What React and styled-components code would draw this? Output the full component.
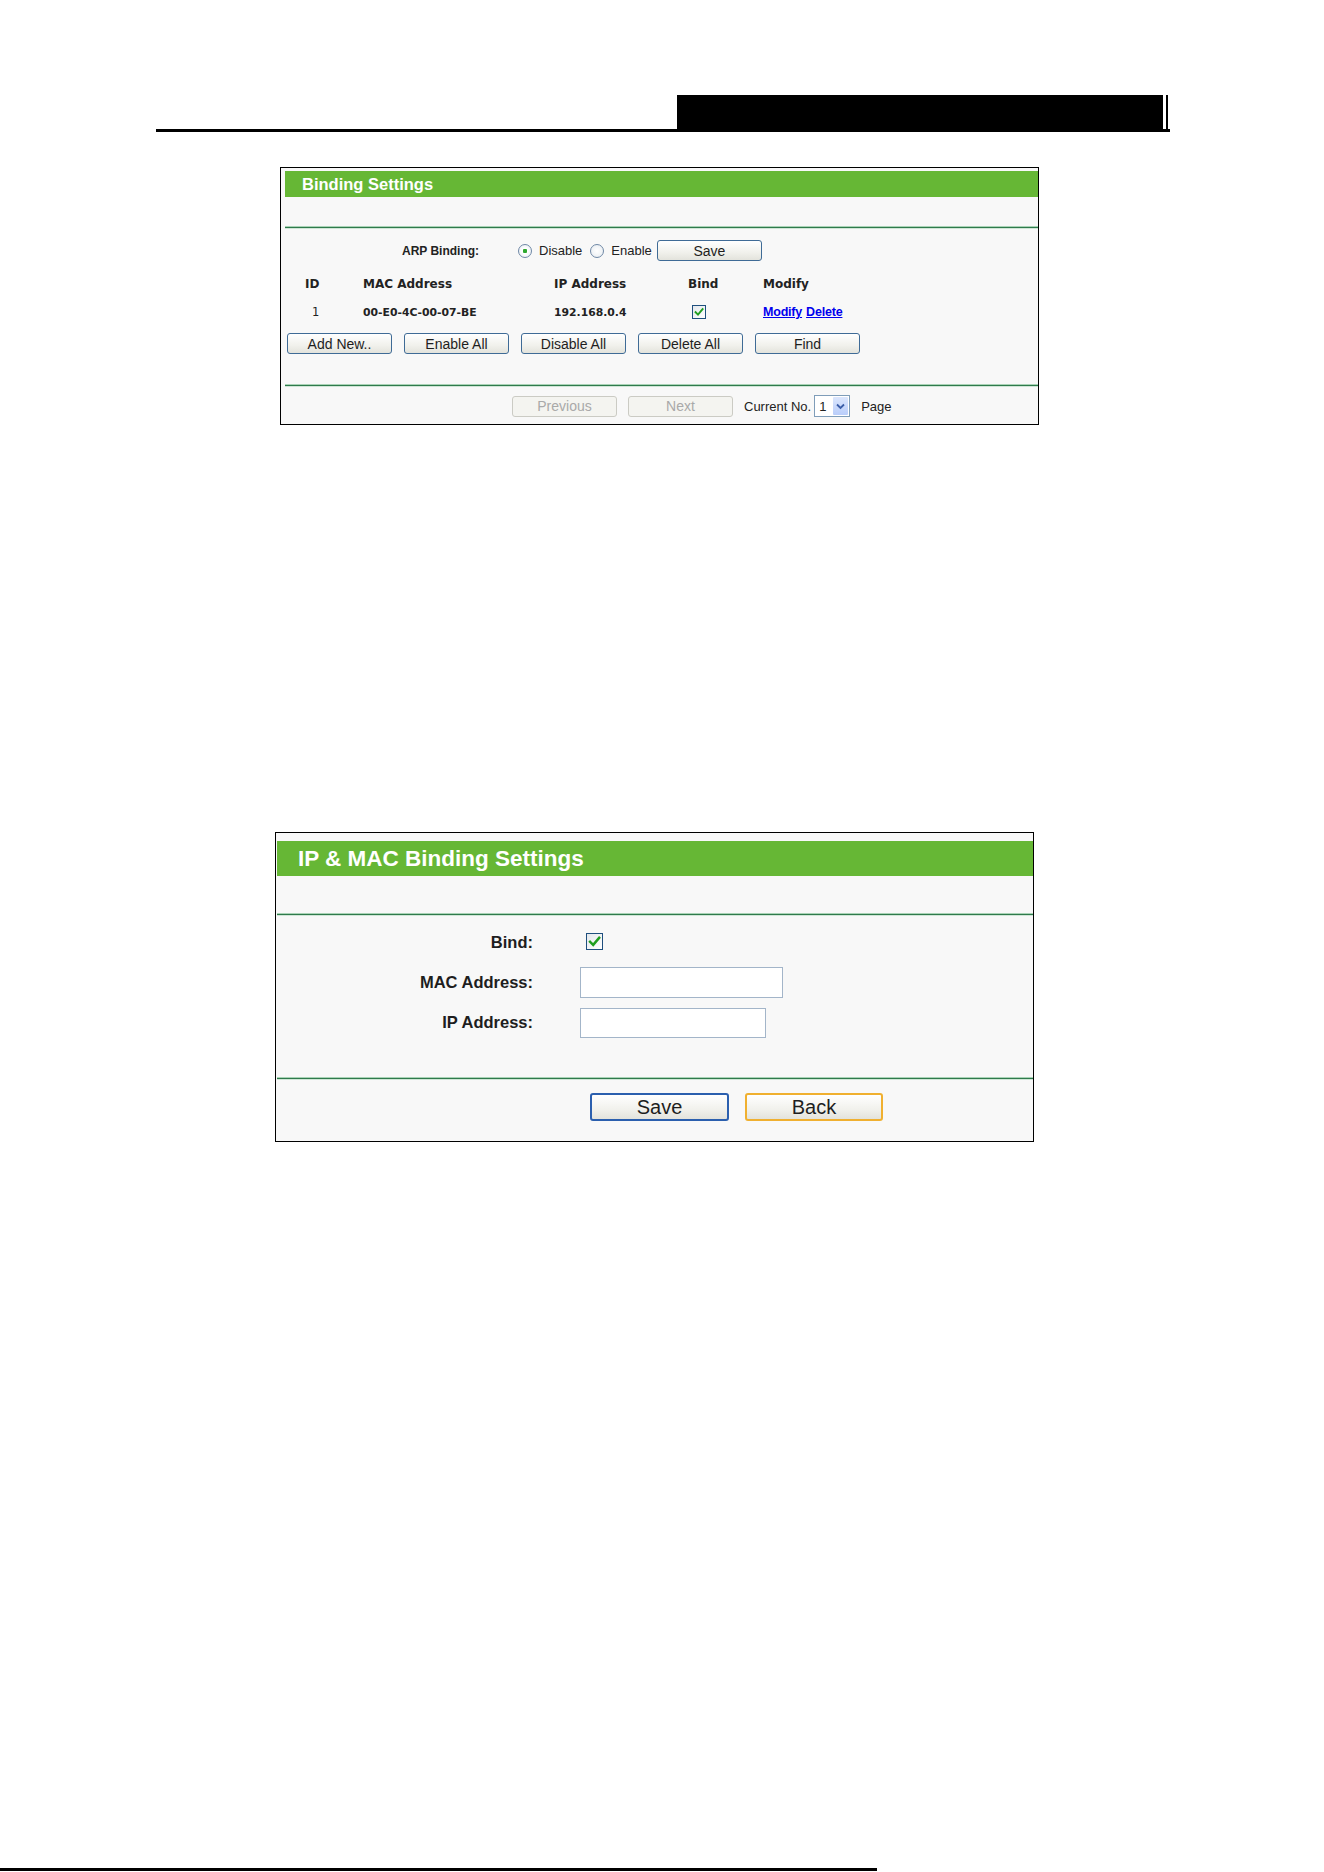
import React from 'react'
import styled, { createGlobalStyle } from 'styled-components'

const Global = createGlobalStyle`
body {
  margin: 0;
  background: #fff;
  font-family: "Liberation Sans", Arial, sans-serif;
  color: #222;
}
`

const Page = styled.div`
width: 1324px;
min-height: 1872px;
padding-top: 95px;
box-sizing: border-box;
display: flex;
flex-direction: column;
`

const Header = styled.div`
margin-left: 156px;
width: 1014px;
display: flex;
justify-content: flex-end;
border-bottom: 3px solid #000;
`

const HeaderBlock = styled.div`
width: 486px;
height: 34px;
margin-right: 7px;
background: #000;
box-shadow: 3px 0 0 0 #fff, 5px 0 0 0 #000;
`

const Panel = styled.div`
margin-left: ${({left}) => left}px;
margin-top: ${({top}) => top}px;
width: 759px;
box-sizing: border-box;
border: 1px solid #000;
background: #f8f8f8;
padding: ${({pad}) => pad};
`

const TitleBar = styled.div`
height: ${({h}) => h}px;
background: #66b735;
color: #fff;
font-weight: bold;
font-size: ${({size}) => size}px;
padding-left: ${({indent}) => indent}px;
display: flex;
align-items: center;
`

const Spacer = styled.div`
height: ${({h}) => h}px;
`

const Divider = styled.div`
height: 3px;
background: linear-gradient(#a9d3b6 0 1px, #2f7a4c 1px 2px, #cfe5d6 2px 3px);
`

const ArpRow = styled.div`
display: flex;
align-items: center;
height: 21px;
margin-top: 11px;
padding-left: 117px;
font-size: 13px;
`

const ArpLabel = styled.span`
font-weight: bold;
font-size: 12px;
width: 116px;
`

const Radio = styled.span`
width: 12px;
height: 12px;
border-radius: 50%;
border: 1px solid #6f88a6;
background: radial-gradient(circle, ${({on}) => on ? '#2fa82f 0 2px, #fff 2.5px' : '#fff 0'}, #e6ebf0);
margin-right: 7px;
display: inline-flex;
`

const RadioText = styled.span`
margin-right: ${({gap}) => gap}px;
`

const Btn = styled.button`
width: ${({w}) => w || 105}px;
height: ${({h}) => h || 21}px;
box-sizing: border-box;
padding: 0;
font-family: "Liberation Sans", Arial, sans-serif;
font-size: ${({size}) => size || 14}px;
color: ${({off}) => off ? '#a9a9a9' : '#1e1e1e'};
background: ${({off}) => off ? '#f4f4f0' : 'linear-gradient(#ffffff, #f1f1ec 60%, #e3e3dc)'};
border-style: solid;
border-width: ${({ring}) => ring ? 2 : 1}px;
border-color: ${({ring, off}) => ring || (off ? '#cbcbc4' : '#3f6b96')};
border-radius: 3px;
`

const TableGrid = styled.div`
display: grid;
grid-template-columns: 58px 191px 134px 75px auto;
padding-left: 20px;
align-items: center;
`

const HeadCell = styled.div`
height: 20px;
margin-top: 13px;
display: flex;
align-items: center;
font-family: "DejaVu Sans", sans-serif;
font-weight: bold;
font-size: 12px;
`

const Cell = styled.div`
height: 20px;
margin-top: 8px;
display: flex;
align-items: center;
padding-left: ${({inset}) => inset || 0}px;
font-family: "DejaVu Sans", sans-serif;
font-weight: ${({plain}) => plain ? 'normal' : 'bold'};
font-size: ${({plain}) => plain ? 11.5 : 10.8}px;
`

const Check = styled.span`
width: ${({s}) => s}px;
height: ${({s}) => s}px;
box-sizing: border-box;
border: 1px solid #1f4f7e;
background: linear-gradient(135deg, #e4e8ec, #ffffff);
display: inline-flex;
align-items: center;
justify-content: center;
margin-left: ${({shift}) => shift || 0}px;
`

const LinkText = styled.a`
color: #0000ee;
text-decoration: underline;
font-family: "Liberation Sans", Arial, sans-serif;
font-weight: bold;
font-size: 12.5px;
margin-right: 4px;
letter-spacing: -0.2px;
`

const ButtonRow = styled.div`
display: flex;
gap: ${({gap}) => gap}px;
margin-top: ${({top}) => top}px;
padding-left: ${({indent}) => indent}px;
padding-bottom: ${({bottom}) => bottom}px;
align-items: center;
`

const PagerGroup = styled.div`
display: flex;
align-items: center;
gap: 3px;
`

const PagerText = styled.span`
font-size: 13px;
`

const Select = styled.div`
width: 36px;
height: 22px;
box-sizing: border-box;
border: 1px solid #7f9db9;
background: #fff;
display: flex;
`

const SelectValue = styled.span`
flex: 1;
font-size: 13px;
padding-left: 4px;
display: flex;
align-items: center;
`

const SelectArrow = styled.span`
width: 15px;
margin: 1px;
background: linear-gradient(#dbe6fd, #b9cdfa);
border-radius: 1px;
display: flex;
align-items: center;
justify-content: center;
`

const FormBody = styled.div`
display: flex;
flex-direction: column;
gap: 9px;
padding: 11px 0 39px;
`

const FormRow = styled.div`
display: grid;
grid-template-columns: 256px auto;
column-gap: 47px;
align-items: center;
height: 31px;
`

const FormLabel = styled.label`
text-align: right;
font-weight: bold;
font-size: 16.5px;
color: #1e1e1e;
`

const TextInput = styled.div`
width: ${({w}) => w}px;
height: ${({h}) => h}px;
box-sizing: border-box;
border: 1px solid #a3b5c9;
background: #fff;
`

const BottomRule = styled.div`
margin-top: auto;
margin-bottom: 1px;
width: 877px;
height: 3px;
background: #000;
`

function Tick({ size }) {
  return (
    <svg width={size} height={size} viewBox="0 0 10 10">
      <path d="M1.6 5.2 L4 7.6 L8.6 2.2" fill="none" stroke="#1f9e1f" strokeWidth="1.9" strokeLinecap="square"/>
    </svg>
  )
}

function BindingSettings() {
  return (
    <Panel left={280} top={35} pad="3px 0 7px 4px">
      <TitleBar h={26} size={16.5} indent={17}>Binding Settings</TitleBar>
      <Spacer h={29}/>
      <Divider/>
      <ArpRow>
        <ArpLabel>ARP Binding:</ArpLabel>
        <Radio on/>
        <RadioText gap={8}>Disable</RadioText>
        <Radio/>
        <RadioText gap={5}>Enable</RadioText>
        <Btn>Save</Btn>
      </ArpRow>
      <TableGrid>
        <HeadCell>ID</HeadCell>
        <HeadCell>MAC Address</HeadCell>
        <HeadCell>IP Address</HeadCell>
        <HeadCell>Bind</HeadCell>
        <HeadCell>Modify</HeadCell>
        <Cell inset={7} plain>1</Cell>
        <Cell>00-E0-4C-00-07-BE</Cell>
        <Cell>192.168.0.4</Cell>
        <Cell inset={4}><Check s={14}><Tick size={10}/></Check></Cell>
        <Cell><LinkText>Modify</LinkText><LinkText>Delete</LinkText></Cell>
      </TableGrid>
      <ButtonRow gap={12} top={11} indent={2} bottom={30}>
        <Btn>Add New..</Btn>
        <Btn>Enable All</Btn>
        <Btn>Disable All</Btn>
        <Btn>Delete All</Btn>
        <Btn>Find</Btn>
      </ButtonRow>
      <Divider/>
      <ButtonRow gap={11} top={8} indent={227} bottom={0}>
        <Btn off>Previous</Btn>
        <Btn off>Next</Btn>
        <PagerGroup>
          <PagerText>Current No.</PagerText>
          <Select>
            <SelectValue>1</SelectValue>
            <SelectArrow>
              <svg width="9" height="7" viewBox="0 0 9 7">
                <path d="M1 1.5 L4.5 5 L8 1.5" fill="none" stroke="#3b5ea8" strokeWidth="1.8"/>
              </svg>
            </SelectArrow>
          </Select>
        </PagerGroup>
        <PagerText>Page</PagerText>
      </ButtonRow>
    </Panel>
  )
}

function MacBindingForm() {
  return (
    <Panel left={275} top={407} pad="8px 0 20px 1px">
      <TitleBar h={35} size={22.5} indent={21}>IP &amp; MAC Binding Settings</TitleBar>
      <Spacer h={37}/>
      <Divider/>
      <FormBody>
        <FormRow>
          <FormLabel>Bind:</FormLabel>
          <span><Check s={17} shift={6}><Tick size={13}/></Check></span>
        </FormRow>
        <FormRow>
          <FormLabel>MAC Address:</FormLabel>
          <TextInput w={203} h={31}/>
        </FormRow>
        <FormRow>
          <FormLabel>IP Address:</FormLabel>
          <TextInput w={186} h={30}/>
        </FormRow>
      </FormBody>
      <Divider/>
      <ButtonRow gap={16} top={13} indent={313} bottom={0}>
        <Btn w={139} h={28} size={20} ring="#2b5fae">Save</Btn>
        <Btn w={138} h={28} size={20} ring="#f0b030">Back</Btn>
      </ButtonRow>
    </Panel>
  )
}

export default function App() {
  return (
    <Page>
      <Global/>
      <Header>
        <HeaderBlock/>
      </Header>
      <BindingSettings/>
      <MacBindingForm/>
      <BottomRule/>
    </Page>
  )
}
